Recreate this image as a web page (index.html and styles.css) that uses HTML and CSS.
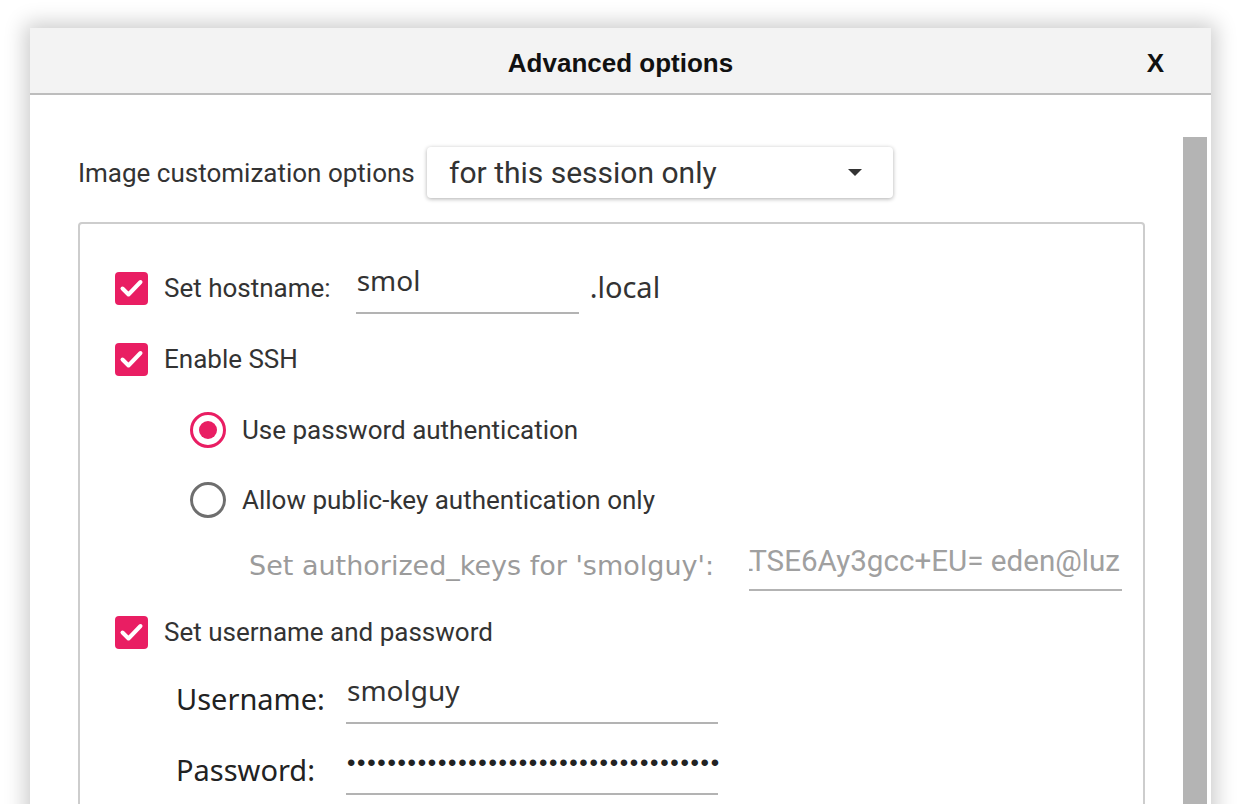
FILE: index.html
```html
<!DOCTYPE html>
<html lang="en">
<head>
<meta charset="utf-8">
<title>Advanced options</title>
<link rel="stylesheet" href="styles.css">
</head>
<body>
<div class="dialog">
  <header class="dialog-header">
    <span class="header-spacer"></span>
    <h1 class="dialog-title">Advanced options</h1>
    <span class="dialog-close">X</span>
  </header>
  <div class="dialog-body">
    <div class="content">
      <div class="persist-row">
        <span class="persist-label">Image customization options</span>
        <div class="select">
          <span class="select-value">for this session only</span>
          <span class="select-arrow"></span>
        </div>
      </div>

      <div class="options">
        <div class="row row-hostname">
          <span class="check"><svg viewBox="0 0 33 33" width="33" height="33"><polyline points="7.5,16.5 13.5,22.5 25.5,10" fill="none" stroke="#fff" stroke-width="4" stroke-linecap="round" stroke-linejoin="round"/></svg></span>
          <span class="label">Set hostname:</span>
          <div class="field field-hostname"><span class="field-text">smol</span></div>
          <span class="suffix">.local</span>
        </div>

        <div class="row row-ssh">
          <span class="check"><svg viewBox="0 0 33 33" width="33" height="33"><polyline points="7.5,16.5 13.5,22.5 25.5,10" fill="none" stroke="#fff" stroke-width="4" stroke-linecap="round" stroke-linejoin="round"/></svg></span>
          <span class="label">Enable SSH</span>
        </div>

        <div class="ssh-options">
          <div class="row row-radio-1">
            <span class="radio radio-on"></span>
            <span class="label">Use password authentication</span>
          </div>
          <div class="row row-radio-2">
            <span class="radio"></span>
            <span class="label">Allow public-key authentication only</span>
          </div>
        </div>

        <div class="row row-keys">
          <span class="keys-label">Set authorized_keys for 'smolguy':</span>
          <div class="field field-keys"><span class="keys-text">LTSE6Ay3gcc+EU= eden@luz</span></div>
        </div>

        <div class="row row-user">
          <span class="check"><svg viewBox="0 0 33 33" width="33" height="33"><polyline points="7.5,16.5 13.5,22.5 25.5,10" fill="none" stroke="#fff" stroke-width="4" stroke-linecap="round" stroke-linejoin="round"/></svg></span>
          <span class="label">Set username and password</span>
        </div>

        <div class="credentials">
          <span class="cred-label">Username:</span>
          <div class="field field-cred"><span class="field-text">smolguy</span></div>
          <span class="cred-label cred-label-pass">Password:</span>
          <div class="field field-cred field-pass"><span class="pass-dots">•••••••••••••••••••••••••••••••••••••</span></div>
        </div>
      </div>
    </div>
    <div class="scrollbar"></div>
  </div>
</div>
</body>
</html>
```

FILE: styles.css
```css
* {
  box-sizing: border-box;
}

html,
body {
  margin: 0;
  height: 100%;
  overflow: hidden;
  background: #fff;
}

body {
  padding: 28px 32px 0 30px;
  font-family: Roboto, "Noto Sans", sans-serif;
  color: #333;
}

/* dialog frame */
.dialog {
  height: 840px;
  background: #fff;
  box-shadow: 0 0 20px 5px rgba(0, 0, 0, 0.2);
  display: flex;
  flex-direction: column;
}

.dialog-header {
  flex: none;
  height: 67px;
  padding-top: 6px;
  background: #f3f3f3;
  border-bottom: 2px solid #bdbdbd;
  display: grid;
  grid-template-columns: 1fr auto 1fr;
  align-items: center;
}

.dialog-title {
  margin: 0;
  font-family: "Liberation Sans", Arial, sans-serif;
  font-weight: bold;
  font-size: 26px;
  color: #111;
}

.dialog-close {
  justify-self: end;
  padding-right: 47px;
  font-family: "Liberation Sans", Arial, sans-serif;
  font-weight: bold;
  font-size: 26px;
  color: #111;
}

.dialog-body {
  flex: 1;
  display: flex;
  min-height: 0;
}

.content {
  flex: 1;
  padding-left: 48px;
}

.scrollbar {
  flex: none;
  width: 24px;
  margin: 42px 4px 0 0;
  background: #b4b4b4;
}

/* persistence selector */
.persist-row {
  margin-top: 52px;
  height: 51px;
  display: flex;
  align-items: center;
}

.persist-label {
  flex: none;
  width: 349px;
  font-size: 26px;
  color: #333;
}

.select {
  width: 466px;
  height: 51px;
  padding: 0 31px 0 22px;
  border-radius: 4px;
  background: #fff;
  box-shadow: 0 1px 4px rgba(0, 0, 0, 0.32);
  display: flex;
  align-items: center;
  justify-content: space-between;
}

.select-value {
  font-size: 30px;
  color: #333;
}

.select-arrow {
  width: 0;
  height: 0;
  border-left: 7.5px solid transparent;
  border-right: 7.5px solid transparent;
  border-top: 7px solid #333;
}

/* options group */
.options {
  margin-top: 24px;
  width: 1067px;
  height: 640px;
  padding: 39px 21px 0 35px;
  border: 2px solid #cdcdcd;
  border-radius: 4px;
}

.row {
  height: 50px;
  display: flex;
  align-items: center;
}

.row-ssh { margin-top: 21px; }
.row-radio-1 { margin-top: 21px; }
.row-radio-2 { margin-top: 20px; }
.row-keys { margin-top: 15px; }
.row-user { margin-top: 17px; }

.check {
  flex: none;
  width: 33px;
  height: 33px;
  margin-right: 16px;
  border-radius: 4px;
  background: #e91e63;
  display: flex;
}

.label {
  font-size: 26px;
  color: #333;
  white-space: nowrap;
}

/* underlined text inputs */
.field {
  border-bottom: 2px solid #b3b3b3;
  display: flex;
  align-items: flex-start;
  white-space: nowrap;
}

.field-text {
  font-family: "Noto Sans", "Open Sans", sans-serif;
  font-size: 28px;
  line-height: 34px;
  color: #333;
  padding-left: 1px;
}

.field-hostname {
  align-self: flex-start;
  width: 223px;
  height: 51px;
  margin-left: 25px;
}

.suffix {
  margin: 0 0 4px 11px;
  font-family: "Noto Sans", "Open Sans", sans-serif;
  font-size: 29px;
  color: #333;
}

.ssh-options {
  padding-left: 75px;
}

.radio {
  flex: none;
  width: 36px;
  height: 36px;
  margin-right: 16px;
  border-radius: 50%;
  border: 3px solid #6e6e6e;
  display: flex;
  align-items: center;
  justify-content: center;
}

.radio-on {
  border-color: #e91e63;
}

.radio-on::after {
  content: "";
  width: 18px;
  height: 18px;
  border-radius: 50%;
  background: #e91e63;
}

.keys-label {
  flex: none;
  margin-left: 134px;
  font-family: "DejaVu Sans", Verdana, sans-serif;
  font-size: 27px;
  color: #9b9b9b;
  white-space: nowrap;
}

/* scrolled to the end of a long key, so its start is clipped */
.field-keys {
  align-self: flex-start;
  width: 373px;
  height: 51px;
  margin-left: auto;
  overflow: hidden;
  justify-content: flex-end;
  padding: 4px 2px 0 0;
}

.keys-text {
  font-size: 29.6px;
  line-height: 34px;
  color: #a0a0a0;
}

/* username / password grid */
.credentials {
  margin-top: 16px;
  padding-left: 61px;
  display: grid;
  grid-template-columns: 170px 372px;
  grid-template-rows: 51px 51px;
  row-gap: 20px;
  align-items: center;
}

.cred-label {
  font-family: "Noto Sans", "Open Sans", sans-serif;
  font-size: 29px;
  color: #222;
  margin-top: -1px;
}

.field-cred {
  height: 51px;
}

.pass-dots {
  font-family: "Liberation Sans", Arial, sans-serif;
  font-size: 24px;
  letter-spacing: 1.7px;
  line-height: 34px;
  color: #222;
  padding: 2px 0 0 1px;
}
```
